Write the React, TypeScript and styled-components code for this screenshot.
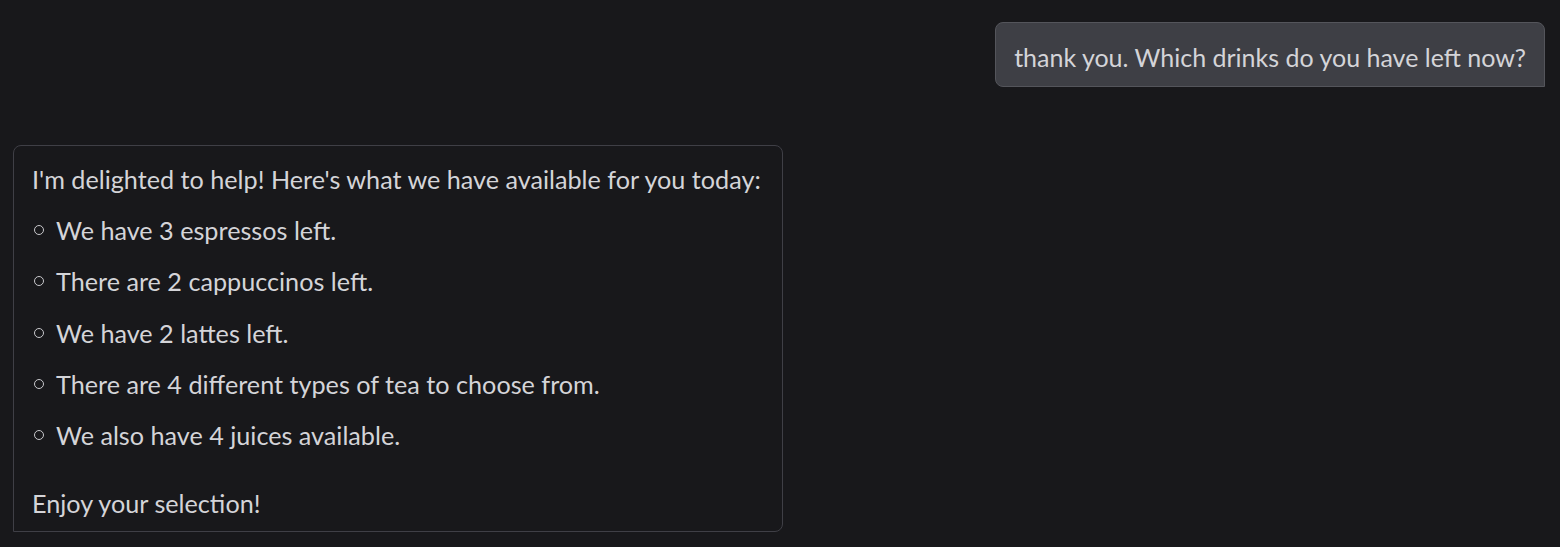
import React from "react";
import styled, { createGlobalStyle } from "styled-components";

const GlobalStyle = createGlobalStyle`
  html, body {
    margin: 0;
    background: #18181b;
  }
  body {
    font-family: "Lato", "Noto Sans", sans-serif;
    color: #d4d4d8;
  }
`;

const Chat = styled.main`
  display: flex;
  flex-direction: column;
  gap: 58px;
  padding: 22px 15px 16px 13px;
`;

const UserBubble = styled.div`
  align-self: flex-end;
  background: #3e3f45;
  border: 1px solid #54555b;
  border-radius: 8px 8px 0 8px;
  padding: 16px 18px 11px;
  font-size: 25px;
  line-height: 36px;
`;

const AssistantBubble = styled.div`
  align-self: flex-start;
  width: 770px;
  box-sizing: border-box;
  border: 1px solid #3f3f46;
  border-radius: 8px 8px 8px 0;
  padding: 15px 16px 10px 18px;
  font-size: 25.2px;
  line-height: 36px;
`;

const Paragraph = styled.p<{ $spaced?: boolean }>`
  margin: 0;
  margin-top: ${({ $spaced }) => ($spaced ? "32px" : "0")};
  white-space: nowrap;
`;

const List = styled.ul`
  list-style: none;
  margin: 15px 0 0;
  padding: 0;
  display: flex;
  flex-direction: column;
  gap: 15.3px;
`;

const Item = styled.li`
  display: flex;
  align-items: center;
  gap: 12px;

  &::before {
    content: "";
    flex: none;
    width: 8px;
    height: 8px;
    margin-left: 2px;
    border: 1.2px solid #c8c8cc;
    border-radius: 50%;
  }
`;

const drinks = [
  "We have 3 espressos left.",
  "There are 2 cappuccinos left.",
  "We have 2 lattes left.",
  "There are 4 different types of tea to choose from.",
  "We also have 4 juices available.",
];

export default function App() {
  return (
    <>
      <GlobalStyle />
      <Chat>
        <UserBubble>thank you. Which drinks do you have left now?</UserBubble>
        <AssistantBubble>
          <Paragraph>
            I'm delighted to help! Here's what we have available for you today:
          </Paragraph>
          <List>
            {drinks.map((d) => (
              <Item key={d}>{d}</Item>
            ))}
          </List>
          <Paragraph $spaced>Enjoy your selection!</Paragraph>
        </AssistantBubble>
      </Chat>
    </>
  );
}
